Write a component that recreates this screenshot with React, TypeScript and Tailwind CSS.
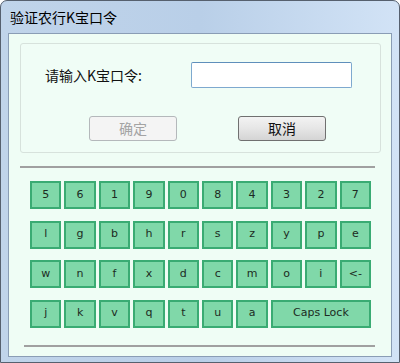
import React from 'react';

const rows: string[][] = [
  ['5', '6', '1', '9', '0', '8', '4', '3', '2', '7'],
  ['l', 'g', 'b', 'h', 'r', 's', 'z', 'y', 'p', 'e'],
  ['w', 'n', 'f', 'x', 'd', 'c', 'm', 'o', 'i', '<-'],
  ['j', 'k', 'v', 'q', 't', 'u', 'a'],
];

const cjk = { fontFamily: '"Noto Sans CJK SC", "Noto Sans", sans-serif' };
const keyFont = { fontFamily: '"DejaVu Sans", "Liberation Sans", sans-serif' };

function Key({ label, wide }: { label: string; wide?: boolean }) {
  return (
    <button
      className={`h-[28px] flex items-center justify-center border-2 border-[#3aab73] bg-[#80d8a9] text-[11px] text-[#1c2b22] ${wide ? 'col-span-3' : ''}`}
      style={keyFont}
    >
      {label}
    </button>
  );
}

export default function App() {
  return (
    <div className="w-[400px] h-[363px] overflow-hidden bg-[#c4d7ed] border border-[#56606e] rounded-t-[7px] bg-gradient-to-r from-[#c0d4ea] via-[#b9cfe8] to-[#d2e3f6]">
      <div className="h-[32px] flex items-center pl-[9px] text-[14px] text-black" style={cjk}>
        验证农行K宝口令
      </div>

      <div className="mx-[7px] h-[324px] border border-[#8a9db5] bg-[#effdf5]">
        {/* top group */}
        <div className="ml-[11px] mt-[9px] w-[361px] h-[110px] border border-[#d7e2dc] rounded-[3px] bg-[#f0fdf6]">
          <div className="flex items-center pl-[24px] mt-[18px]">
            <span className="w-[146px] text-[14px] text-[#111]" style={cjk}>
              请输入K宝口令:
            </span>
            <input className="w-[161px] h-[26px] bg-white border border-[#7ea9cf] border-t-[#5f8fbb] rounded-[2px] outline-none" />
          </div>
          <div className="flex items-center pl-[68px] mt-[28px] gap-[61px]">
            <button
              className="w-[88px] h-[25px] rounded-[3px] border border-[#b4b8bb] bg-[#f4f4f4] text-[14px] text-[#a3a3a3]"
              style={cjk}
            >
              确定
            </button>
            <button
              className="w-[88px] h-[25px] rounded-[3px] border border-[#707070] bg-gradient-to-b from-[#f3f3f3] via-[#e6e6e6] to-[#d4d4d4] text-[14px] text-[#111]"
              style={cjk}
            >
              取消
            </button>
          </div>
        </div>

        <div className="ml-[11px] mt-[13px] w-[355px] border-t-2 border-[#a0a0a0]" />

        {/* keyboard */}
        <div className="ml-[21px] mt-[13px] w-[341px] grid grid-cols-10 gap-x-[3px] gap-y-[11.5px]">
          {rows.map((row) => row.map((k) => <Key key={k} label={k} />))}
          <Key label="Caps Lock" wide />
        </div>

        <div className="ml-[15px] mt-[17px] w-[351px] border-t-2 border-[#a0a0a0]" />
      </div>
    </div>
  );
}
